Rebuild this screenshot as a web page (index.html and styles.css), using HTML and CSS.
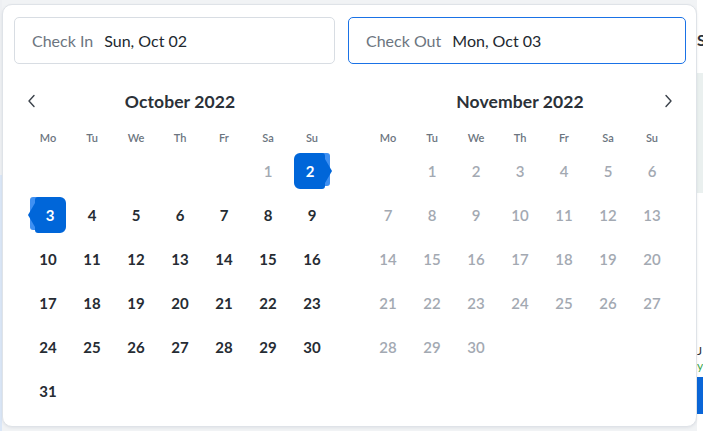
FILE: index.html
```html
<!DOCTYPE html>
<html>
<head>
<meta charset="utf-8">
<link rel="stylesheet" href="styles.css">
</head>
<body>
<div class="page">
  <div class="page-left"></div>
  <div class="page-main"></div>
  <div class="page-right">
    <div class="pr-title">S</div>
    <div class="pr-map"></div>
    <div class="pr-text">J</div>
    <div class="pr-green">y</div>
    <div class="pr-btn"></div>
  </div>
</div>

<div class="picker">
  <div class="inputs">
    <div class="field">
      <span class="label">Check In</span>
      <span class="value">Sun, Oct 02</span>
    </div>
    <div class="field active">
      <span class="label">Check Out</span>
      <span class="value">Mon, Oct 03</span>
    </div>
  </div>

  <div class="months">
    <div class="month">
      <div class="month-head">
        <span class="nav prev"><svg width="10" height="14" viewBox="0 0 10 14"><path d="M7 1.5 L2 7 L7 12.5" fill="none" stroke="#3a414a" stroke-width="1.4" stroke-linecap="round" stroke-linejoin="round"/></svg></span>
        <span class="month-title">October 2022</span>
      </div>
      <div class="grid">
        <span class="wd">Mo</span><span class="wd">Tu</span><span class="wd">We</span><span class="wd">Th</span><span class="wd">Fr</span><span class="wd">Sa</span><span class="wd">Su</span>
        <span class="d"></span><span class="d"></span><span class="d"></span><span class="d"></span><span class="d"></span><span class="d dis">1</span><span class="d"><span class="sel start"><span class="selbg"></span><span class="num">2</span></span></span>
        <span class="d"><span class="sel end"><span class="selbg"></span><span class="num">3</span></span></span><span class="d">4</span><span class="d">5</span><span class="d">6</span><span class="d">7</span><span class="d">8</span><span class="d">9</span>
        <span class="d">10</span><span class="d">11</span><span class="d">12</span><span class="d">13</span><span class="d">14</span><span class="d">15</span><span class="d">16</span>
        <span class="d">17</span><span class="d">18</span><span class="d">19</span><span class="d">20</span><span class="d">21</span><span class="d">22</span><span class="d">23</span>
        <span class="d">24</span><span class="d">25</span><span class="d">26</span><span class="d">27</span><span class="d">28</span><span class="d">29</span><span class="d">30</span>
        <span class="d">31</span>
      </div>
    </div>

    <div class="month">
      <div class="month-head">
        <span class="month-title">November 2022</span>
        <span class="nav next"><svg width="10" height="14" viewBox="0 0 10 14"><path d="M3 1.5 L8 7 L3 12.5" fill="none" stroke="#3a414a" stroke-width="1.4" stroke-linecap="round" stroke-linejoin="round"/></svg></span>
      </div>
      <div class="grid">
        <span class="wd">Mo</span><span class="wd">Tu</span><span class="wd">We</span><span class="wd">Th</span><span class="wd">Fr</span><span class="wd">Sa</span><span class="wd">Su</span>
        <span class="d"></span><span class="d dis">1</span><span class="d dis">2</span><span class="d dis">3</span><span class="d dis">4</span><span class="d dis">5</span><span class="d dis">6</span>
        <span class="d dis">7</span><span class="d dis">8</span><span class="d dis">9</span><span class="d dis">10</span><span class="d dis">11</span><span class="d dis">12</span><span class="d dis">13</span>
        <span class="d dis">14</span><span class="d dis">15</span><span class="d dis">16</span><span class="d dis">17</span><span class="d dis">18</span><span class="d dis">19</span><span class="d dis">20</span>
        <span class="d dis">21</span><span class="d dis">22</span><span class="d dis">23</span><span class="d dis">24</span><span class="d dis">25</span><span class="d dis">26</span><span class="d dis">27</span>
        <span class="d dis">28</span><span class="d dis">29</span><span class="d dis">30</span>
      </div>
    </div>
  </div>
</div>
</body>
</html>
```

FILE: styles.css
```css
* { box-sizing: border-box; }
html, body { margin: 0; padding: 0; }
body {
  width: 703px;
  height: 431px;
  overflow: hidden;
  background: #f1f3f5;
  font-family: "Lato", "Noto Sans", sans-serif;
  position: relative;
}

.page {
  display: flex;
  height: 431px;
}
.page-left {
  width: 2px;
  background: linear-gradient(#eef0f3 0 175px, #dbe7f7 175px);
}
.page-main { flex: 1; }
.page-right {
  width: 6px;
  background: #ffffff;
  overflow: hidden;
  display: flex;
  flex-direction: column;
}
.pr-title {
  margin-top: 30px;
  margin-left: 0;
  font-size: 16px;
  font-weight: 700;
  color: #2b3138;
  white-space: nowrap;
}
.pr-map {
  margin-top: 24px;
  height: 120px;
  background: #eaf0ef;
}
.pr-text {
  margin-top: 150px;
  font-size: 12px;
  color: #2b3138;
  white-space: nowrap;
}
.pr-green {
  font-size: 12px;
  color: #3aa64a;
  white-space: nowrap;
}
.pr-btn {
  margin-top: 4px;
  height: 37px;
  background: #0a66d8;
}

.picker {
  position: absolute;
  left: 2px;
  top: 4px;
  width: 695px;
  height: 423px;
  background: #ffffff;
  border: 1px solid #dfe3e8;
  border-radius: 10px;
  box-shadow: 0 1px 3px rgba(30, 40, 60, 0.08);
  padding: 12px 10px 0 11px;
}

.inputs {
  display: grid;
  grid-template-columns: 321px 338px;
  gap: 13px;
}
.field {
  height: 47px;
  border: 1px solid #d8dde3;
  border-radius: 5px;
  display: flex;
  align-items: center;
  padding-left: 17px;
  font-size: 16px;
}
.field.active {
  border-color: #1a72e6;
}
.label {
  color: #6c7580;
  margin-right: 11px;
}
.value {
  color: #22282f;
}

.months {
  display: flex;
  gap: 32px;
  padding: 0 12px;
}
.month { width: 308px; }

.month-head {
  margin-top: 24px;
  height: 26px;
  position: relative;
  display: flex;
  align-items: center;
  justify-content: center;
}
.month-title {
  font-size: 17.5px;
  font-weight: 700;
  color: #2b3138;
  letter-spacing: 0.1px;
}
.nav {
  position: absolute;
  top: 6px;
  display: flex;
}
.nav.prev { left: 1px; }
.nav.next { right: 1px; }

.grid {
  margin-top: 11px;
  display: grid;
  grid-template-columns: repeat(7, 44px);
  grid-auto-rows: 44px;
  grid-template-rows: 24px;
}
.wd {
  display: flex;
  align-items: center;
  justify-content: center;
  font-size: 11px;
  font-weight: 600;
  color: #6c7580;
}
.d {
  display: flex;
  align-items: center;
  justify-content: center;
  font-size: 15px;
  font-weight: 700;
  color: #262c33;
}
.d.dis {
  color: #a3a9b2;
  font-weight: 600;
}

.sel {
  position: relative;
  width: 36px;
  height: 36px;
  display: flex;
  align-items: center;
  justify-content: center;
  color: #ffffff;
}
.sel::before {
  content: "";
  position: absolute;
  top: 0;
  bottom: 3px;
  width: 18px;
  background: #3f90f2;
}
.sel.start::before { right: 0; border-radius: 0 3px 3px 0; }
.sel.end::before { left: 0; border-radius: 3px 0 0 3px; }
.selbg {
  position: absolute;
  top: 0;
  bottom: 0;
  width: 31px;
  background: #0066d9;
}
.sel.start .selbg { left: 0; border-radius: 6px 3px 3px 6px; }
.sel.end .selbg { right: 0; border-radius: 3px 6px 6px 3px; }
.selbg::after {
  content: "";
  position: absolute;
  top: 6px;
  border-top: 12px solid transparent;
  border-bottom: 12px solid transparent;
}
.sel.start .selbg::after {
  left: 100%;
  border-left: 7px solid #0066d9;
}
.sel.end .selbg::after {
  right: 100%;
  border-right: 7px solid #0066d9;
}
.num {
  position: relative;
  font-size: 15px;
  font-weight: 700;
}
.sel.start .num { margin-right: 4px; }
.sel.end .num { margin-left: 4px; }
```
